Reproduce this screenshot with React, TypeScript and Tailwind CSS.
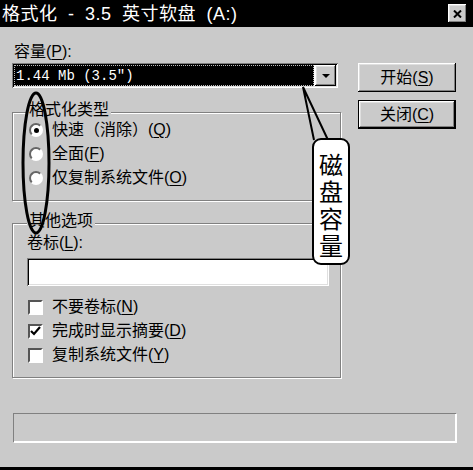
import React from "react";

// win9x style bevels
const raised =
  "shadow-[inset_-1px_-1px_0_#000,inset_1px_1px_0_#fff,inset_-2px_-2px_0_#808080,inset_2px_2px_0_#dfdfdf]";
const sunken =
  "shadow-[inset_1px_1px_0_#808080,inset_-1px_-1px_0_#fff,inset_2px_2px_0_#000,inset_-2px_-2px_0_#dfdfdf]";

function Key({ k }: { k: string }) {
  return (
    <>
      (<span className="underline underline-offset-2">{k}</span>)
    </>
  );
}

function Radio({ on, children }: { on?: boolean; children: React.ReactNode }) {
  return (
    <div className="flex items-center h-[24px] gap-[9px] pl-[16px]">
      <span className="w-[14px] h-[14px] rounded-full bg-white border-2 border-t-[#666] border-l-[#666] border-r-white border-b-white flex items-center justify-center">
        {on && <span className="w-[5px] h-[5px] rounded-full bg-black" />}
      </span>
      <span>{children}</span>
    </div>
  );
}

function Check({ on, children }: { on?: boolean; children: React.ReactNode }) {
  return (
    <div className="flex items-center h-[24px] gap-[9px] pl-[15px]">
      <span className="w-[15px] h-[15px] bg-white border-2 border-t-[#555] border-l-[#555] border-r-white border-b-white flex items-center justify-center">
        {on && (
          <svg width="11" height="10" viewBox="0 0 11 10">
            <path d="M1 5 L4 8 L10 1" stroke="#000" strokeWidth="2.2" fill="none" />
          </svg>
        )}
      </span>
      <span>{children}</span>
    </div>
  );
}

function Group({ title, children }: { title: string; children: React.ReactNode }) {
  return (
    <div className="border border-[#808080] shadow-[inset_1px_1px_0_#fff,1px_1px_0_#fff] w-[329px]">
      <div className="-mt-[11px] ml-[14px] w-fit px-[2px] bg-[#cacaca] h-[16px]">{title}</div>
      {children}
    </div>
  );
}

export default function App() {
  return (
    <div className="w-[473px] h-[470px] bg-[#cacaca] relative overflow-hidden flex flex-col text-black text-[16px] leading-[16px] font-['Liberation_Sans','Noto_Sans_CJK_SC',sans-serif]">
      {/* title bar */}
      <div className="h-[27px] bg-black flex items-center justify-between pl-[2px] pr-[6px]">
        <span className="text-white text-[18px] leading-[18px] [word-spacing:5px] tracking-[0.5px]">格式化 - 3.5 英寸软盘 (A:)</span>
        <div className={`w-[19px] h-[19px] bg-[#cacaca] ${raised} flex items-center justify-center`}>
          <svg width="9" height="8" viewBox="0 0 9 8">
            <path d="M1 0.5 L8 7.5 M8 0.5 L1 7.5" stroke="#000" strokeWidth="2" />
          </svg>
        </div>
      </div>

      <div className="flex pt-[17px] pl-[12px]">
        <div className="w-[329px]">
          <div className="ml-[2px] h-[16px]">
            容量<Key k="P" />:
          </div>
          <div className={`mt-[3px] w-[326px] h-[25px] bg-white ${sunken} flex items-center p-[2px] gap-[1px]`}>
            <div className="flex-1 h-full bg-black outline outline-1 outline-dotted outline-[#bbb] outline-offset-[-1px] flex items-center pl-[2px] text-white text-[14px] font-['Liberation_Mono',monospace]">
              1.44 Mb (3.5″)
            </div>
            <div className={`w-[21px] h-full bg-[#cacaca] ${raised} flex items-center justify-center`}>
              <svg width="8" height="4" viewBox="0 0 8 4">
                <path d="M0 0 L8 0 L4 4 Z" fill="#000" />
              </svg>
            </div>
          </div>

          <div className="mt-[24px]">
            <Group title="格式化类型">
              <div className="pb-[10px]">
                <Radio on>
                  快速（消除）<Key k="Q" />
                </Radio>
                <Radio>
                  全面<Key k="F" />
                </Radio>
                <Radio>
                  仅复制系统文件<Key k="O" />
                </Radio>
              </div>
            </Group>
          </div>

          <div className="mt-[22px]">
            <Group title="其他选项">
              <div className="pb-[10px]">
                <div className="mt-[6px] ml-[14px] h-[16px]">
                  卷标<Key k="L" />:
                </div>
                <div className={`mt-[7px] ml-[14px] w-[302px] h-[28px] bg-white ${sunken}`} />
                <div className="mt-[9px]">
                  <Check>
                    不要卷标<Key k="N" />
                  </Check>
                  <Check on>
                    完成时显示摘要<Key k="D" />
                  </Check>
                  <Check>
                    复制系统文件<Key k="Y" />
                  </Check>
                </div>
              </div>
            </Group>
          </div>
        </div>

        <div className="ml-[17px] pt-[19px] flex flex-col gap-[8px]">
          <button className={`w-[98px] h-[29px] bg-[#cacaca] ${raised} flex items-center justify-center`}>
            开始<Key k="S" />
          </button>
          <button className="w-[98px] h-[29px] border border-black bg-[#cacaca]">
            <span className={`w-full h-full ${raised} flex items-center justify-center`}>
              关闭<Key k="C" />
            </span>
          </button>
        </div>
      </div>

      {/* status bar */}
      <div className="mt-[35px] ml-[13px] w-[443px] h-[29px] shadow-[inset_1px_1px_0_#808080,inset_-1px_-1px_0_#fff,1px_1px_0_#fff]" />
      <div className="flex-1" />
      <div className="h-[3px] bg-black" />

      {/* annotations drawn over the dialog */}
      <svg className="absolute left-0 top-0 pointer-events-none" width="473" height="470">
        <ellipse cx="36" cy="163" rx="13" ry="70" stroke="#000" strokeWidth="3" fill="none" />
        <path d="M314 140 L303 87 L328 140" stroke="#000" strokeWidth="2" fill="none" />
      </svg>
      <div className="absolute left-[312px] top-[138px] w-[38px] h-[127px] bg-white border-2 border-black rounded-[9px] flex justify-center pt-[10px]">
        <div className="w-[24px] text-[24px] leading-[27px] break-all font-['Noto_Sans_CJK_SC',sans-serif]">磁盘容量</div>
      </div>
    </div>
  );
}
